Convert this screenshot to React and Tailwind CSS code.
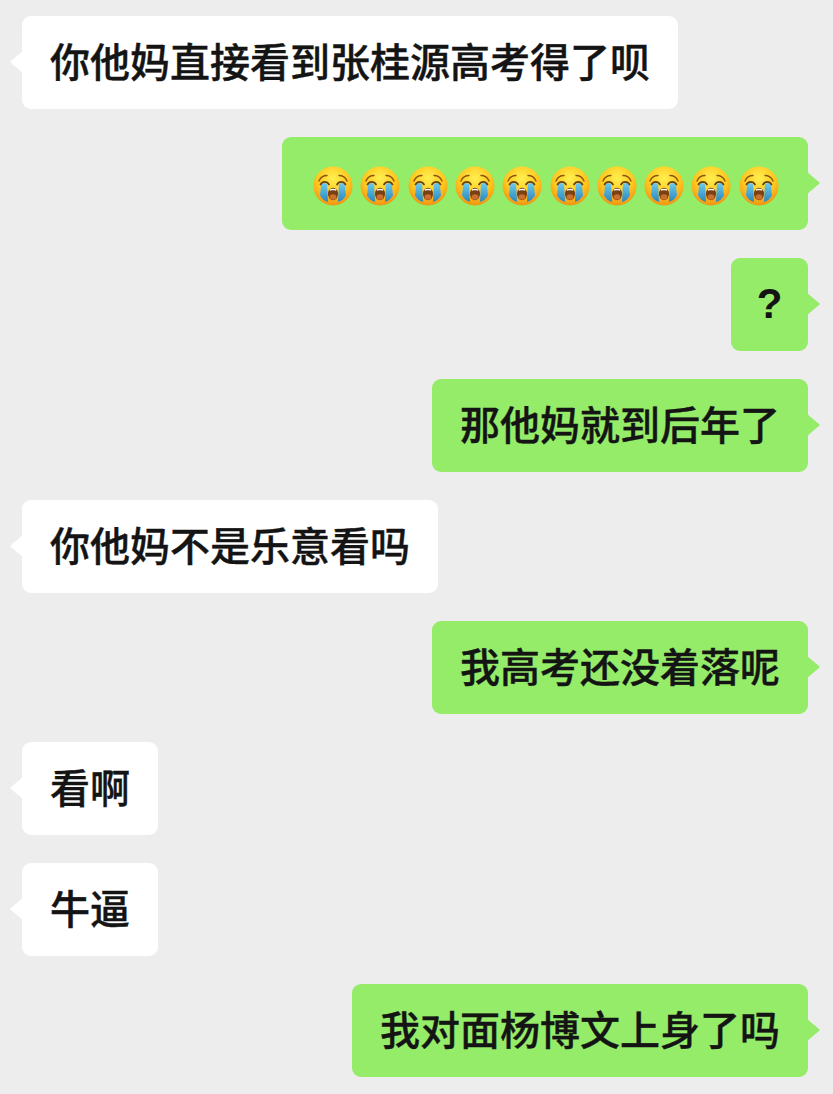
import React from 'react';

const CryEmoji = () => (
  <svg width="40" height="40" viewBox="0 0 40 40" className="shrink-0">
    <defs>
      <radialGradient id="face" cx="50%" cy="30%" r="70%">
        <stop offset="0%" stopColor="#fff04f" />
        <stop offset="60%" stopColor="#ffc61f" />
        <stop offset="100%" stopColor="#ef9412" />
      </radialGradient>
      <linearGradient id="tear" x1="0" y1="0" x2="0" y2="1">
        <stop offset="0%" stopColor="#6ccbef" />
        <stop offset="100%" stopColor="#2a86ba" />
      </linearGradient>
    </defs>
    <circle cx="20" cy="20" r="19.5" fill="url(#face)" />
    <path d="M8 19.500c0-1.500 1.200-2.500 3-2.500s3.200 1 3.200 2.500L15 36c-3.500-1-6-3-8-6.500z" fill="url(#tear)" />
    <path d="M32 19.500c0-1.500-1.200-2.500-3-2.500s-3.200 1-3.200 2.500L25 36c3.500-1 6-3 8-6.500z" fill="url(#tear)" />
    <path d="M6 15c1.500-3.500 4.500-5.500 8-5.500" fill="none" stroke="#8a5312" strokeWidth="1.400" strokeLinecap="round" />
    <path d="M34 15c-1.500-3.500-4.500-5.500-8-5.500" fill="none" stroke="#8a5312" strokeWidth="1.400" strokeLinecap="round" />
    <path d="M7.500 18.500c2-3.500 6.500-3.500 8.500 0" fill="none" stroke="#6b3f10" strokeWidth="1.700" strokeLinecap="round" />
    <path d="M24 18.500c2-3.500 6.500-3.500 8.500 0" fill="none" stroke="#6b3f10" strokeWidth="1.700" strokeLinecap="round" />
    <ellipse cx="20" cy="28" rx="5" ry="6.200" fill="#7a3f12" />
    <ellipse cx="20" cy="31" rx="3.400" ry="2.800" fill="#c9702c" />
    <path d="M16.500 23.500c2-1 5-1 7 0l-.6 1.200c-1.800-.6-4-.6-5.800 0z" fill="#fff" />
  </svg>
);

const Tail = ({ side, color }) => (
  <svg
    width="13"
    height="30"
    viewBox="0 0 13 30"
    className={`absolute top-[31px] ${side === 'left' ? '-left-[12px]' : '-right-[12px] -scale-x-100'}`}
  >
    <path d="M13 1C13 4 11.500 5 10 6.500L1 14C0 14.700 0 15.300 1 16L10 23.500C11.500 25 13 26 13 29Z" fill={color} />
  </svg>
);

const Bubble = ({ side, children }) => {
  const isLeft = side === 'left';
  return (
    <div className={`flex ${isLeft ? 'justify-start pl-[22px]' : 'justify-end pr-[25px]'}`}>
      <div className={`relative h-[93px] flex items-center px-[28px] rounded-[9px] ${isLeft ? 'bg-white' : 'bg-[#95ec69]'}`}>
        <Tail side={side} color={isLeft ? '#ffffff' : '#95ec69'} />
        {children}
      </div>
    </div>
  );
};

const messages = [
  { side: 'left', text: '你他妈直接看到张桂源高考得了呗' },
  { side: 'right', emoji: 10 },
  { side: 'right', text: '?' },
  { side: 'right', text: '那他妈就到后年了' },
  { side: 'left', text: '你他妈不是乐意看吗' },
  { side: 'right', text: '我高考还没着落呢' },
  { side: 'left', text: '看啊' },
  { side: 'left', text: '牛逼' },
  { side: 'right', text: '我对面杨博文上身了吗' },
];

export default function App() {
  return (
    <div className="w-[833px] h-[1094px] overflow-hidden bg-[#ededed] pt-[16px] flex flex-col gap-[28px] font-['Noto_Sans_CJK_SC',sans-serif]">
      {messages.map((msg, i) => (
        <Bubble key={i} side={msg.side}>
          {msg.emoji ? (
            <div className="flex gap-[7.300px] pl-[3px] pr-[1.300px] pt-[5px]">
              {Array.from({ length: msg.emoji }).map((_, j) => (
                <CryEmoji key={j} />
              ))}
            </div>
          ) : msg.text === '?' ? (
            <span className="w-[21px] flex justify-center text-[42px] leading-none font-bold text-[#141414] font-['Liberation_Sans',sans-serif] pb-[1px]">?</span>
          ) : (
            <span className="text-[40px] leading-none font-medium text-[#141414] whitespace-nowrap pb-[5px] [-webkit-text-stroke:0.4px_#141414]">{msg.text}</span>
          )}
        </Bubble>
      ))}
    </div>
  );
}
